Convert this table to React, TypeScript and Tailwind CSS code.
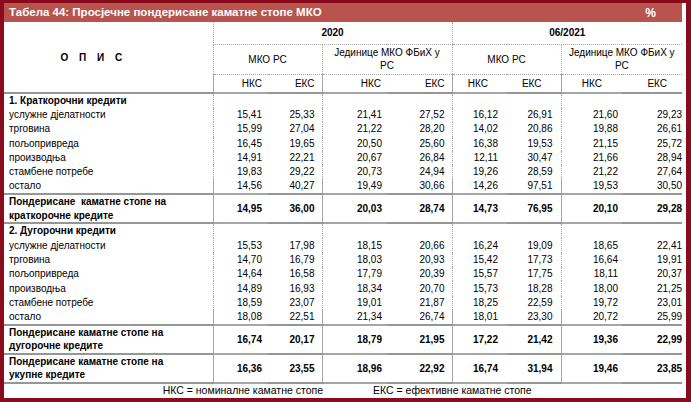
import React from 'react';

type Row = { label: string; v: string[] };

const shortRows: Row[] = [
    { label: 'услужне дјелатности', v: ['15,41', '25,33', '21,41', '27,52', '16,12', '26,91', '21,60', '29,23'] },
    { label: 'трговина', v: ['15,99', '27,04', '21,22', '28,20', '14,02', '20,86', '19,88', '26,61'] },
    { label: 'пољопривреда', v: ['16,45', '19,65', '20,50', '25,60', '16,38', '19,53', '21,15', '25,72'] },
    { label: 'производња', v: ['14,91', '22,21', '20,67', '26,84', '12,11', '30,47', '21,66', '28,94'] },
    { label: 'стамбене потребе', v: ['19,83', '29,22', '20,73', '24,94', '19,26', '28,59', '21,22', '27,64'] },
    { label: 'остало', v: ['14,56', '40,27', '19,49', '30,66', '14,26', '97,51', '19,53', '30,50'] },
];

const longRows: Row[] = [
    { label: 'услужне дјелатности', v: ['15,53', '17,98', '18,15', '20,66', '16,24', '19,09', '18,65', '22,41'] },
    { label: 'трговина', v: ['14,70', '16,79', '18,03', '20,93', '15,42', '17,73', '16,64', '19,91'] },
    { label: 'пољопривреда', v: ['14,64', '16,58', '17,79', '20,39', '15,57', '17,75', '18,11', '20,37'] },
    { label: 'производња', v: ['14,89', '16,93', '18,34', '20,70', '15,73', '18,28', '18,00', '21,25'] },
    { label: 'стамбене потребе', v: ['18,59', '23,07', '19,01', '21,87', '18,25', '22,59', '19,72', '23,01'] },
    { label: 'остало', v: ['18,08', '22,51', '21,34', '26,74', '18,01', '23,30', '20,72', '25,99'] },
];

// per-column right padding for values, and for the НКС/ЕКС headers
const valPad = ['pr-[6px]', 'pr-[7px]', 'pr-[5px]', 'pr-[7px]', 'pr-[9px]', 'pr-[8px]', 'pr-[4px]', 'pr-0'];
const headPad = ['pr-[6px]', 'pr-[7px]', 'pr-[6px]', 'pr-[7px]', 'pr-[19px]', 'pr-[19px]', 'pr-[20px]', 'pr-[15px]'];
// dotted separators before subgroup columns
const sep = ['border-l border-dotted border-[#a6a6a6]', '', 'border-l border-dotted border-[#a6a6a6]', '', 'border-l border-dotted border-[#a6a6a6]', '', 'border-l border-dotted border-[#a6a6a6]', ''];

const line = 'border-b-2 border-solid border-[#969696]';

const DataRow: React.FC<{ row: Row; last?: boolean }> = ({ row, last }) => (
    <tr className={last ? 'h-[14.3px] ' + line : 'h-[14.3px]'}>
        <td className={'pl-[5px] leading-[14px] ' + (last ? line : '')}>{row.label}</td>
        {row.v.map((x, i) => (
            <td key={i} className={'text-right leading-[14px] ' + valPad[i] + ' ' + sep[i] + (last ? ' ' + line : '')}>
                {x}
            </td>
        ))}
    </tr>
);

const TotalRow: React.FC<{ l1: string; l2: string; v: string[] }> = ({ l1, l2, v }) => (
    <tr className={'h-[27px] font-bold ' + line}>
        <td className={'pl-[5px] leading-[13.5px] whitespace-pre ' + line}>
            {l1}
            <br />
            {l2}
        </td>
        {v.map((x, i) => (
            <td key={i} className={'text-right ' + valPad[i] + ' ' + sep[i] + ' ' + line}>
                {x}
            </td>
        ))}
    </tr>
);

const SectionTitle: React.FC<{ text: string }> = ({ text }) => (
    <tr className="h-[14.3px]">
        <td className="pl-[5px] leading-[14px] font-bold">{text}</td>
        {sep.map((s, i) => (
            <td key={i} className={s} />
        ))}
    </tr>
);

export default function App() {
    return (
        <div className="w-[691px] h-[402px] bg-[#8a0b1c] pt-[3px] pl-[4px] pr-[5px] pb-[4px] font-['Liberation_Sans',Arial,sans-serif] text-[10px] text-black">
            <div className="h-full bg-white pr-[4px] flex flex-col">
                <div className="h-[19px] shrink-0 bg-[#b8544d] text-white font-bold flex items-center justify-between pl-[5px] pr-[26px]">
                    <span className="text-[11.5px]">Табела 44: Просјечне пондерисане каматне стопе МКО</span>
                    <span className="text-[12px]">%</span>
                </div>
                <table className="table-fixed w-[678px] border-collapse shrink-0">
                    <colgroup>
                        <col className="w-[209px]" />
                        <col className="w-[55px]" />
                        <col className="w-[54px]" />
                        <col className="w-[65px]" />
                        <col className="w-[65px]" />
                        <col className="w-[55px]" />
                        <col className="w-[54px]" />
                        <col className="w-[61px]" />
                        <col className="w-[60px]" />
                    </colgroup>
                    <thead>
                        <tr className="h-[22px]">
                            <td rowSpan={3} className={'text-center font-bold tracking-[4px] pr-[30px] ' + line}>
                                О П И С
                            </td>
                            <td colSpan={4} className="text-center font-bold border-l border-b border-dotted border-[#a6a6a6]">
                                2020
                            </td>
                            <td colSpan={4} className="text-center font-bold border-l border-b border-dotted border-[#a6a6a6]">
                                06/2021
                            </td>
                        </tr>
                        <tr className="h-[30px]">
                            <td colSpan={2} className="text-center border-l border-b border-dotted border-[#a6a6a6]">
                                МКО РС
                            </td>
                            <td colSpan={2} className="text-center leading-[13px] border-l border-b border-dotted border-[#a6a6a6]">
                                Јединице МКО ФБиХ у<br />РС
                            </td>
                            <td colSpan={2} className="text-center border-l border-b border-dotted border-[#a6a6a6]">
                                МКО РС
                            </td>
                            <td colSpan={2} className="text-center leading-[13px] border-l border-b border-dotted border-[#a6a6a6]">
                                Јединице МКО ФБиХ у<br />РС
                            </td>
                        </tr>
                        <tr className={'h-[19px] ' + line}>
                            {['НКС', 'ЕКС', 'НКС', 'ЕКС', 'НКС', 'ЕКС', 'НКС', 'ЕКС'].map((t, i) => (
                                <td key={i} className={'text-right ' + headPad[i] + ' ' + sep[i] + ' ' + line}>
                                    {t}
                                </td>
                            ))}
                        </tr>
                    </thead>
                    <tbody>
                        <SectionTitle text="1. Краткорочни кредити" />
                        {shortRows.map((r, i) => (
                            <DataRow key={i} row={r} last={i === shortRows.length - 1} />
                        ))}
                        <TotalRow
                            l1="Пондерисане  каматне стопе на"
                            l2="краткорочне кредите"
                            v={['14,95', '36,00', '20,03', '28,74', '14,73', '76,95', '20,10', '29,28']}
                        />
                        <SectionTitle text="2. Дугорочни кредити" />
                        {longRows.map((r, i) => (
                            <DataRow key={i} row={r} last={i === longRows.length - 1} />
                        ))}
                        <TotalRow
                            l1="Пондерисане каматне стопе на"
                            l2="дугорочне кредите"
                            v={['16,74', '20,17', '18,79', '21,95', '17,22', '21,42', '19,36', '22,99']}
                        />
                        <TotalRow
                            l1="Пондерисане каматне стопе на"
                            l2="укупне кредите"
                            v={['16,36', '23,55', '18,96', '22,92', '16,74', '31,94', '19,46', '23,85']}
                        />
                    </tbody>
                </table>
                <div className="flex-1 min-h-0 flex items-center text-[10.5px]">
                    <span className="w-[319px] text-right">НКС = номиналне каматне стопе</span>
                    <span className="ml-[50px]">ЕКС = ефективне каматне стопе</span>
                </div>
            </div>
        </div>
    );
}
